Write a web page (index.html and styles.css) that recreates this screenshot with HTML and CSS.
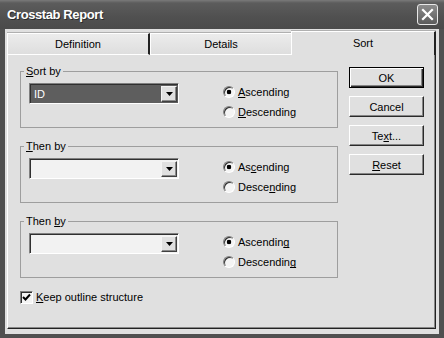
FILE: index.html
```html
<!DOCTYPE html>
<html lang="en">
<head>
    <meta charset="UTF-8">
    <meta name="viewport" content="width=device-width, initial-scale=1.0">
    <title>Crosstab Report</title>

    <link rel="stylesheet" href="styles.css">

</head>
<body>
<div class="window">
    <div class="titlebar">
        <span class="title">Crosstab Report</span>
        <span class="close">
            <svg width="13" height="13" viewBox="0 0 13 13"><path d="M2 2L11 11M11 2L2 11" stroke="#fff" stroke-width="2.2" stroke-linecap="square"/></svg>
        </span>
    </div>

    <div class="client">
        <div class="tabs">
            <div class="tab first">Definition</div>
            <div class="tab second">Details</div>
            <div class="tab active">Sort</div>
        </div>

        <div class="panel">
            <div class="groups">
                <fieldset class="group">
                    <legend><u>S</u>ort by</legend>
                    <div class="row">
                        <div class="combo selected">
                            <span class="value">ID</span>
                            <span class="drop"><svg width="7" height="4" viewBox="0 0 7 4"><polygon points="0,0 7,0 3.5,4" fill="#000"/></svg></span>
                        </div>
                        <div class="radios">
                            <label class="radio"><span class="dot checked"></span><span><u>A</u>scending</span></label>
                            <label class="radio"><span class="dot"></span><span><u>D</u>escending</span></label>
                        </div>
                    </div>
                </fieldset>

                <fieldset class="group">
                    <legend><u>T</u>hen by</legend>
                    <div class="row">
                        <div class="combo">
                            <span class="value"></span>
                            <span class="drop"><svg width="7" height="4" viewBox="0 0 7 4"><polygon points="0,0 7,0 3.5,4" fill="#000"/></svg></span>
                        </div>
                        <div class="radios">
                            <label class="radio"><span class="dot checked"></span><span>As<u>c</u>ending</span></label>
                            <label class="radio"><span class="dot"></span><span>Desce<u>n</u>ding</span></label>
                        </div>
                    </div>
                </fieldset>

                <fieldset class="group">
                    <legend>Then <u>b</u>y</legend>
                    <div class="row">
                        <div class="combo">
                            <span class="value"></span>
                            <span class="drop"><svg width="7" height="4" viewBox="0 0 7 4"><polygon points="0,0 7,0 3.5,4" fill="#000"/></svg></span>
                        </div>
                        <div class="radios">
                            <label class="radio"><span class="dot checked"></span><span>Ascendin<u>g</u></span></label>
                            <label class="radio"><span class="dot"></span><span>Descendin<u>g</u></span></label>
                        </div>
                    </div>
                </fieldset>

                <label class="check">
                    <span class="box"><svg width="9" height="9" viewBox="0 0 9 9"><path d="M1 4L3.5 6.5L8 1.5" stroke="#000" stroke-width="2" fill="none"/></svg></span>
                    <span><u>K</u>eep outline structure</span>
                </label>
            </div>

            <div class="buttons">
                <button type="button" class="btn default">OK</button>
                <button type="button" class="btn">Cancel</button>
                <button type="button" class="btn">Te<u>x</u>t...</button>
                <button type="button" class="btn"><u>R</u>eset</button>
            </div>
        </div>
    </div>
</div>
</body>
</html>
```

FILE: styles.css
```css
* {
    box-sizing: border-box;
}

html, body {
    margin: 0;
}

body {
    background: #3c3c3c;
    font-family: "Liberation Sans", Arial, sans-serif;
    font-size: 11px;
    color: #000;
}

u {
    text-decoration-thickness: 1px;
    text-underline-offset: 1px;
    text-decoration-skip-ink: none;
}

.window {
    width: 444px;
    height: 338px;
    display: flex;
    flex-direction: column;
    background: #505050;
}

.titlebar {
    height: 29px;
    flex: none;
    display: flex;
    align-items: center;
    justify-content: space-between;
    padding: 0 6px 0 7px;
    background: linear-gradient(#7a7a7a 0, #5c5c5c 3px, #505050 60%, #4a4a4a 100%);
}

.title {
    color: #fff;
    font-weight: bold;
    font-size: 13px;
    letter-spacing: -0.4px;
    text-shadow: 1px 1px #2c2c2c;
}

.close {
    width: 21px;
    height: 21px;
    border: 1px solid #e8e8e8;
    border-radius: 3px;
    background: linear-gradient(#8c8c8c, #5c5c5c);
    display: flex;
    align-items: center;
    justify-content: center;
}

.client {
    flex: 1;
    margin: 0 5px 4px 5px;
    padding: 2px 3px 5px 2px;
    background: #e0e0e0;
    display: flex;
    flex-direction: column;
}

/* tabs */
.tabs {
    height: 24px;
    flex: none;
    display: flex;
    align-items: flex-end;
}

.tab {
    height: 22px;
    display: flex;
    align-items: center;
    justify-content: center;
    background: linear-gradient(#ececec, #dedede);
    border-top: 1px solid #fff;
    border-left: 1px solid #fff;
    border-bottom: 1px solid #fff;
    box-shadow: 0 -1px #b0b0b0;
}

.tab.first {
    width: 143px;
    border-right: 2px solid #222;
}

.tab.second {
    width: 141px;
}

.tab.active {
    width: 145px;
    height: 24px;
    padding-bottom: 2px;
    background: #e0e0e0;
    border-bottom: none;
    border-right: 2px solid #222;
}

/* panel */
.panel {
    flex: 1;
    display: flex;
    padding: 10px 10px 0 12px;
    border-left: 1px solid #fff;
    border-right: 1px solid #222;
    border-bottom: 1px solid #222;
    box-shadow: inset -1px -1px #888;
}

.groups {
    width: 318px;
    display: flex;
    flex-direction: column;
    gap: 12px;
}

.group {
    margin: 0;
    padding: 0 8px;
    height: 63px;
    border: 1px solid #9e9e9e;
}

.group legend {
    margin-left: -5px;
    padding: 0 2px;
    line-height: 13px;
}

.row {
    display: flex;
    padding-top: 4px;
}

.combo {
    width: 150px;
    height: 21px;
    margin-top: 1px;
    display: flex;
    padding: 2px 1px 1px 2px;
    border: 1px solid;
    border-color: #808080 #fff #fff #808080;
    box-shadow: inset 1px 1px #303030;
    background: #f2f2f2;
}

.combo .value {
    flex: 1;
    padding-left: 2px;
    line-height: 16px;
}

.combo.selected {
    background: #5e5e5e;
}

.combo.selected .value {
    color: #fff;
}

.drop {
    width: 16px;
    flex: none;
    display: flex;
    align-items: center;
    justify-content: center;
    background: #e0e0e0;
    border: 1px solid;
    border-color: #f4f4f4 #404040 #404040 #f4f4f4;
    box-shadow: inset -1px -1px #8a8a8a;
}

.radios {
    margin-left: 44px;
    display: flex;
    flex-direction: column;
}

.radio {
    height: 20px;
    display: flex;
    align-items: center;
    gap: 3px;
}

.dot {
    width: 12px;
    height: 12px;
    border-radius: 50%;
    border: 1px solid;
    border-color: #808080 #fff #fff #808080;
    box-shadow: inset 1px 1px #303030;
    background: #f4f4f4;
}

.dot.checked {
    background: radial-gradient(circle, #000 0 2px, #f4f4f4 2.6px);
}

.check {
    height: 14px;
    display: flex;
    align-items: center;
    gap: 3px;
}

.box {
    width: 13px;
    height: 13px;
    display: flex;
    align-items: center;
    justify-content: center;
    border: 1px solid;
    border-color: #808080 #fff #fff #808080;
    box-shadow: inset 1px 1px #303030;
    background: #f4f4f4;
}

/* buttons */
.buttons {
    width: 75px;
    margin: 2px 0 0 11px;
    display: flex;
    flex-direction: column;
    gap: 8px;
}

.btn {
    width: 75px;
    height: 21px;
    padding: 0;
    font-family: "Liberation Sans", Arial, sans-serif;
    font-size: 11px;
    color: #000;
    background: #e0e0e0;
    border: 1px solid;
    border-color: #fff #2a2a2a #2a2a2a #fff;
    box-shadow: inset -1px -1px #858585;
}

.btn.default {
    border: 1px solid #000;
    box-shadow: inset 1px 1px #fff, inset -1px -1px #2a2a2a, inset -2px -2px #858585;
}
```
